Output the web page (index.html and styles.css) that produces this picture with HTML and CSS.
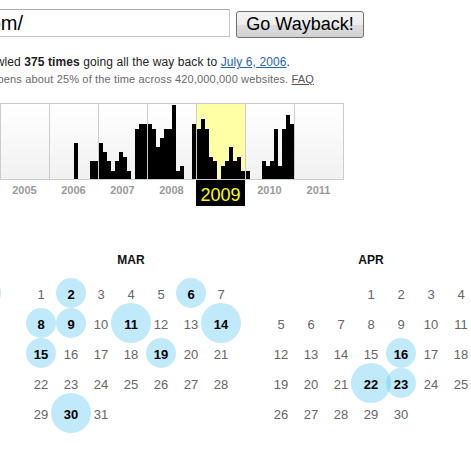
FILE: index.html
```html
<!DOCTYPE html>
<html>
<head>
<meta charset="utf-8">
<title>Wayback Machine</title>
<link rel="stylesheet" href="styles.css">
</head>
<body>
<form class="search">
  <div class="url"><span class="url-text">http://www.example.com/</span></div>
  <button type="button" class="go">Go Wayback!</button>
</form>
<p class="line1"><span>http://www.example.com/ has been crawled <b>375 times</b> going all the way back to <a href="#">July 6, 2006</a>.</span></p>
<p class="line2"><span>A crawl can be a duplicate of the last one. It happens about 25% of the time across 420,000,000 websites. <a href="#">FAQ</a></span></p>

<div class="spark">
  <div class="yr"><i style="height:0"></i></div>
  <div class="yr"><i style="height:0"></i><i style="height:0"></i><i style="height:0"></i><i style="height:0"></i><i style="height:0"></i><i style="height:0"></i><i style="height:36px"></i><i style="height:0"></i><i style="height:0"></i><i style="height:0"></i><i style="height:18px"></i><i style="height:18px"></i></div>
  <div class="yr"><i style="height:36px"></i><i style="height:27px"></i><i style="height:18px"></i><i style="height:8px"></i><i style="height:18px"></i><i style="height:27px"></i><i style="height:22px"></i><i style="height:8px"></i><i style="height:0"></i><i style="height:50px"></i><i style="height:55px"></i><i style="height:55px"></i></div>
  <div class="yr"><i style="height:55px"></i><i style="height:50px"></i><i style="height:32px"></i><i style="height:41px"></i><i style="height:50px"></i><i style="height:50px"></i><i style="height:74px"></i><i style="height:8px"></i><i style="height:13px"></i><i style="height:0"></i><i style="height:0"></i><i style="height:55px"></i></div>
  <div class="yr cur"><i style="height:50px"></i><i style="height:60px"></i><i style="height:50px"></i><i style="height:22px"></i><i style="height:18px"></i><i style="height:0"></i><i style="height:13px"></i><i style="height:18px"></i><i style="height:32px"></i><i style="height:18px"></i><i style="height:22px"></i><i style="height:8px"></i></div>
  <div class="yr"><i style="height:8px"></i><i style="height:0"></i><i style="height:0"></i><i style="height:0"></i><i style="height:18px"></i><i style="height:13px"></i><i style="height:18px"></i><i style="height:50px"></i><i style="height:13px"></i><i style="height:50px"></i><i style="height:64px"></i><i style="height:55px"></i></div>
  <div class="yr"><i style="height:0"></i></div>
</div>
<div class="years">
  <div class="yl">2005</div>
  <div class="yl">2006</div>
  <div class="yl">2007</div>
  <div class="yl">2008</div>
  <div class="yl cur">2009</div>
  <div class="yl">2010</div>
  <div class="yl">2011</div>
</div>

<div class="months">
  <div class="month">
    <div class="mname">FEB</div>
    <div class="days">
      <span class="d">1</span><span class="d">2</span><span class="d">3</span><span class="d">4</span><span class="d">5</span><span class="d">6</span><span class="d c big">7</span>
      <span class="d">8</span><span class="d">9</span><span class="d">10</span><span class="d">11</span><span class="d">12</span><span class="d">13</span><span class="d">14</span>
      <span class="d">15</span><span class="d">16</span><span class="d">17</span><span class="d">18</span><span class="d">19</span><span class="d">20</span><span class="d">21</span>
      <span class="d">22</span><span class="d">23</span><span class="d">24</span><span class="d">25</span><span class="d">26</span><span class="d">27</span><span class="d">28</span>
    </div>
  </div>
  <div class="month">
    <div class="mname">MAR</div>
    <div class="days">
      <span class="d">1</span><span class="d c">2</span><span class="d">3</span><span class="d">4</span><span class="d">5</span><span class="d c">6</span><span class="d">7</span>
      <span class="d c">8</span><span class="d c">9</span><span class="d">10</span><span class="d c big">11</span><span class="d">12</span><span class="d">13</span><span class="d c big">14</span>
      <span class="d c">15</span><span class="d">16</span><span class="d">17</span><span class="d">18</span><span class="d c">19</span><span class="d">20</span><span class="d">21</span>
      <span class="d">22</span><span class="d">23</span><span class="d">24</span><span class="d">25</span><span class="d">26</span><span class="d">27</span><span class="d">28</span>
      <span class="d">29</span><span class="d c big">30</span><span class="d">31</span>
    </div>
  </div>
  <div class="month">
    <div class="mname">APR</div>
    <div class="days">
      <span class="d wed">1</span><span class="d">2</span><span class="d">3</span><span class="d">4</span>
      <span class="d">5</span><span class="d">6</span><span class="d">7</span><span class="d">8</span><span class="d">9</span><span class="d">10</span><span class="d">11</span>
      <span class="d">12</span><span class="d">13</span><span class="d">14</span><span class="d">15</span><span class="d c">16</span><span class="d">17</span><span class="d">18</span>
      <span class="d">19</span><span class="d">20</span><span class="d">21</span><span class="d c big">22</span><span class="d c">23</span><span class="d">24</span><span class="d">25</span>
      <span class="d">26</span><span class="d">27</span><span class="d">28</span><span class="d">29</span><span class="d">30</span>
    </div>
  </div>
</div>
</body>
</html>
```

FILE: styles.css
```css
* { box-sizing: border-box; }

html, body {
  margin: 0;
  padding: 0;
  background: #fff;
}

body {
  width: 471px;
  height: 457px;
  overflow: hidden;
  font-family: "Liberation Sans", Arial, sans-serif;
  color: #000;
}

/* search form */
.search {
  display: flex;
  align-items: flex-start;
  margin: 0;
  padding-top: 9px;
}

.url {
  flex: none;
  width: 240px;
  height: 28px;
  margin-left: -10px;
  border: 1px solid #c6c6c6;
  border-top-color: #ababab;
  background: #fff;
  overflow: hidden;
}

.url-text {
  display: flex;
  justify-content: flex-end;
  width: 32px;
  white-space: nowrap;
  font-size: 20px;
  line-height: 26px;
  color: #000;
}

.go {
  flex: none;
  width: 128px;
  height: 27px;
  margin: 2px 0 0 6px;
  padding: 0;
  border: 1px solid #707070;
  border-radius: 3px;
  background: linear-gradient(#f4f4f4 0%, #ececec 50%, #dddddd 52%, #d2d2d2 100%);
  font-family: "Liberation Sans", Arial, sans-serif;
  font-size: 18px;
  line-height: 25px;
  color: #000;
}

/* summary lines */
.line1, .line2 {
  display: flex;
  justify-content: flex-end;
  white-space: nowrap;
  margin: 0;
}

.line1 {
  width: 290px;
  margin-top: 17px;
  font-size: 12px;
  line-height: 15px;
  letter-spacing: 0.1px;
  color: #222;
}

.line1 a {
  color: #1f66b0;
}

.line2 {
  width: 314px;
  margin-top: 2px;
  font-size: 11px;
  line-height: 14px;
  letter-spacing: 0.15px;
  color: #6a6a6a;
}

.line2 a {
  color: #555;
}

/* sparkline */
.spark {
  display: flex;
  width: 344px;
  height: 77px;
  margin-top: 17px;
  border: 1px solid #cccccc;
  border-right: none;
  background: linear-gradient(#ffffff, #f1f1f1);
}

.yr {
  display: flex;
  align-items: flex-end;
  width: 49px;
  border-right: 1px solid #cccccc;
}

.yr.cur {
  background: #ffffa6;
}

.yr i {
  display: block;
  width: 4px;
  background: #000;
}

.years {
  display: flex;
  height: 26px;
}

.yl {
  width: 49px;
  text-align: center;
  font-size: 11px;
  font-weight: bold;
  line-height: 21px;
  color: #9a9a9a;
}

.yl.cur {
  height: 26px;
  padding-top: 5px;
  background: #000;
  color: #ffff00;
  font-size: 18px;
  font-weight: normal;
}

/* calendar */
.months {
  display: flex;
  gap: 30px;
  margin-top: 44px;
  margin-left: -214px;
}

.month {
  flex: none;
  width: 210px;
}

.mname {
  height: 20px;
  margin-bottom: 9px;
  text-align: center;
  font-size: 12px;
  font-weight: bold;
  line-height: 20px;
  color: #111;
}

.days {
  display: grid;
  grid-template-columns: repeat(7, 30px);
  grid-auto-rows: 30px;
  isolation: isolate;
}

.d {
  position: relative;
  display: flex;
  align-items: center;
  justify-content: center;
  font-size: 13px;
  color: #666;
}

.d.wed {
  grid-column-start: 4;
}

.d.c {
  font-weight: bold;
  color: #000;
}

.d.c::before {
  content: "";
  position: absolute;
  z-index: -1;
  left: 50%;
  top: 50%;
  width: 30px;
  height: 30px;
  margin: -16px 0 0 -15px;
  border-radius: 50%;
  background: rgba(110, 205, 242, 0.43);
}

.d.c.big::before {
  width: 40px;
  height: 40px;
  margin: -21px 0 0 -20px;
}
```
